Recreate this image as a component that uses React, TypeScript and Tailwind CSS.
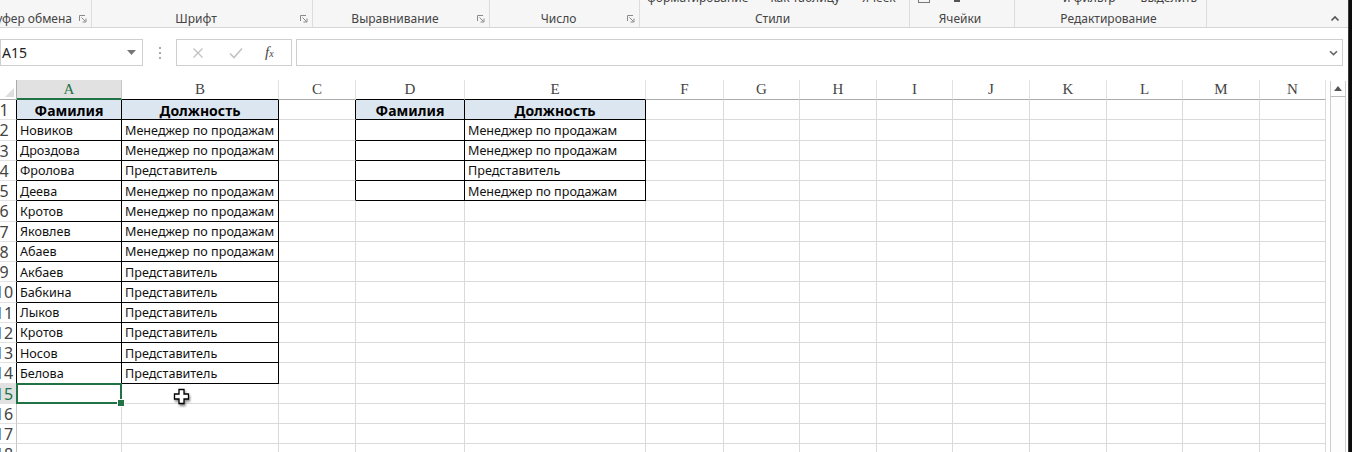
import React from 'react';

const colLetters = ['A', 'B', 'C', 'D', 'E', 'F', 'G', 'H', 'I', 'J', 'K', 'L', 'M', 'N'];

const colA = ['Фамилия', 'Новиков', 'Дроздова', 'Фролова', 'Деева', 'Кротов', 'Яковлев', 'Абаев', 'Акбаев', 'Бабкина', 'Лыков', 'Кротов', 'Носов', 'Белова'];
const mgr = 'Менеджер по продажам';
const rep = 'Представитель';
const colB = ['Должность', mgr, mgr, rep, mgr, mgr, mgr, mgr, rep, rep, rep, rep, rep, rep];
const colE = ['Должность', mgr, mgr, rep, mgr];

const gridCols = 'grid grid-cols-[17px_105px_157px_77px_109px_181px_78px_76px_77px_76px_77px_77px_76px_77px_66px]';

function Launcher() {
  return (
    <svg width="8" height="8" viewBox="0 0 8 8" className="shrink-0">
      <path d="M0.5 6V0.5H6" stroke="#8a8a8a" fill="none" />
      <path d="M2.5 2.5L6.5 6.5M7 3.5V7H3.5" stroke="#8a8a8a" fill="none" />
    </svg>
  );
}

function RibbonGroup({ width, label, launcher, top }: { width: string; label: string; launcher?: boolean; top?: React.ReactNode }) {
  return (
    <div className={`${width} h-full flex flex-col border-r border-[#dcdcdc] shrink-0`}>
      <div className="h-[11px] overflow-hidden relative">{top}</div>
      <div className="flex-1 flex items-center pr-[4px]">
        <div className="flex-1 whitespace-nowrap text-[12px] text-[#444] text-center leading-[16px]">{label}</div>
        {launcher && <Launcher />}
      </div>
    </div>
  );
}

function TopText({ items }: { items: { text: string; pl: string }[] }) {
  return (
    <div className="flex -mt-[9px] text-[12px] text-[#444] whitespace-nowrap leading-[14px]">
      {items.map((it, i) => (
        <span key={i} className={it.pl}>{it.text}</span>
      ))}
    </div>
  );
}

function Ribbon() {
  return (
    <div className="h-[28px] shrink-0 flex bg-[#f6f6f6] border-b border-[#d6d6d6] font-['Noto_Sans',sans-serif]">
      <div className="w-[92px] h-full flex flex-col border-r border-[#dcdcdc] shrink-0">
        <div className="h-[11px]" />
        <div className="flex-1 flex items-center pr-[4px]">
          <div className="flex-1 min-w-0 overflow-hidden whitespace-nowrap text-[12px] text-[#444] flex justify-end pr-[7px] leading-[16px]">
            <span className="shrink-0">Буфер обмена</span>
          </div>
          <Launcher />
        </div>
      </div>
      <RibbonGroup width="w-[221px]" label="Шрифт" launcher />
      <RibbonGroup width="w-[177px]" label="Выравнивание" launcher />
      <RibbonGroup width="w-[150px]" label="Число" launcher />
      <RibbonGroup
        width="w-[270px]"
        label="Стили"
        top={<TopText items={[{ text: 'форматирование', pl: 'pl-[7px]' }, { text: 'как таблицу', pl: 'pl-[22px]' }, { text: 'ячеек', pl: 'pl-[22px]' }]} />}
      />
      <RibbonGroup
        width="w-[105px]"
        label="Ячейки"
        top={
          <div className="flex gap-[24px] pl-[8px]">
            <div className="w-[12px] h-[3px] border-b border-x border-[#777]" />
            <div className="w-[6px] h-[2px] bg-[#555]" />
          </div>
        }
      />
      <RibbonGroup
        width="w-[192px]"
        label="Редактирование"
        top={<TopText items={[{ text: 'и фильтр', pl: 'pl-[48px]' }, { text: 'выделить', pl: 'pl-[25px]' }]} />}
      />
      <div className="flex-1 flex items-center justify-end pr-[8px] pt-[10px]">
        <svg width="10" height="7" viewBox="0 0 10 7">
          <path d="M1.5 5.5L5 2L8.5 5.5" stroke="#555" strokeWidth="1.6" fill="none" />
        </svg>
      </div>
    </div>
  );
}

function FormulaBar() {
  return (
    <div className="h-[52px] shrink-0 flex items-start pt-[11px] bg-white font-['Noto_Sans',sans-serif]">
      <div className="w-[143px] h-[27px] border border-[#cfcfcf] flex items-center pl-[1px] pr-[6px] shrink-0">
        <span className="flex-1 text-[14px] text-[#222]">A15</span>
        <svg width="9" height="5" viewBox="0 0 9 5">
          <path d="M0 0H9L4.5 5Z" fill="#777" />
        </svg>
      </div>
      <div className="w-[33px] h-[27px] flex flex-col items-center justify-center gap-[3px] shrink-0">
        <div className="w-[2px] h-[2px] bg-[#aaa]" />
        <div className="w-[2px] h-[2px] bg-[#aaa]" />
        <div className="w-[2px] h-[2px] bg-[#aaa]" />
      </div>
      <div className="w-[116px] h-[27px] border border-[#cfcfcf] flex items-center pl-[15px] shrink-0">
        <svg width="12" height="12" viewBox="0 0 12 12">
          <path d="M1.5 1.5L10.5 10.5M10.5 1.5L1.5 10.5" stroke="#c2c2c2" strokeWidth="1.3" />
        </svg>
        <svg width="14" height="12" viewBox="0 0 14 12" className="ml-[25px]">
          <path d="M1 6.5L5 10.5L13 1.5" stroke="#c2c2c2" strokeWidth="1.6" fill="none" />
        </svg>
        <span className="ml-[22px] font-['Liberation_Serif',serif] italic text-[15px] text-[#444] leading-[18px]">
          f<span className="text-[10px]">x</span>
        </span>
      </div>
      <div className="ml-[4px] w-[1047px] h-[27px] border border-[#cfcfcf] flex items-center justify-end pr-[4px]">
        <svg width="9" height="6" viewBox="0 0 9 6">
          <path d="M1 1.2L4.5 4.6L8 1.2" stroke="#666" strokeWidth="1.6" fill="none" />
        </svg>
      </div>
    </div>
  );
}

function HeaderRow() {
  return (
    <div className={`${gridCols} h-[20px] shrink-0 font-['Liberation_Serif',serif] text-[15px]`}>
      <div className="border-r border-b border-[#ababab] bg-white flex items-end justify-end p-[2px]">
        <svg width="9" height="9" viewBox="0 0 9 9">
          <path d="M9 0V9H0Z" fill="#dedede" />
        </svg>
      </div>
      {colLetters.map((l, i) => {
        if (i === 0) {
          return (
            <div key={l} className="bg-[#e1e1e1] border-r border-[#c6c6c6] border-b-2 border-b-[#217346] flex items-center justify-center text-[#217346] leading-[17px]">
              {l}
            </div>
          );
        }
        const dark = i === 1 || i === 3 || i === 4;
        return (
          <div key={l} className={`bg-white border-r border-[#e2e2e2] border-b ${dark ? 'border-b-black' : 'border-b-[#ababab]'} flex items-center justify-center text-[#444] leading-[17px]`}>
            {l}
          </div>
        );
      })}
    </div>
  );
}

function cellText(r: number, c: number) {
  if (c === 0 && r <= 14) return colA[r - 1];
  if (c === 1 && r <= 14) return colB[r - 1];
  if (c === 3 && r === 1) return 'Фамилия';
  if (c === 4 && r <= 5) return colE[r - 1];
  return '';
}

function inTable(r: number, c: number) {
  return (r <= 14 && (c === 0 || c === 1)) || (r <= 5 && (c === 3 || c === 4));
}

function Body() {
  const rows = Array.from({ length: 18 }, (_, i) => i + 1);
  return (
    <div className={`${gridCols} auto-rows-[20.25px] shrink-0 font-['Noto_Sans',sans-serif]`}>
      {rows.map((r) => (
        <React.Fragment key={r}>
          <div
            className={`flex items-center overflow-hidden whitespace-nowrap text-[16px] leading-[18px] pt-[1px] border-b border-b-[#e2e2e2] border-r ${
              r <= 14 ? 'border-r-black' : r === 15 ? 'border-r-[#217346]' : 'border-r-[#c6c6c6]'
            } ${r === 15 ? 'bg-[#e1e1e1] text-[#217346]' : 'bg-white text-[#444]'}`}
          >
            <span className="-ml-[8px] w-[24px] shrink-0 text-center">{r}</span>
          </div>
          {colLetters.map((_, c) => {
            const t = inTable(r, c);
            const leftOfTable = r <= 5 && c === 2;
            const head = r === 1 && t;
            const text = cellText(r, c);
            const border = t
              ? 'border-r border-b border-black'
              : leftOfTable
              ? 'border-r border-b border-r-black border-b-[#dadada]'
              : 'border-r border-b border-[#dadada]';
            return (
              <div
                key={c}
                className={`relative flex items-center whitespace-nowrap overflow-visible ${border} ${
                  head ? 'bg-[#dce6f1] justify-center font-bold text-[14px] text-black pt-[2px]' : 'px-[3px] pt-[3px] text-[12.6px] text-[#111]'
                } ${r === 15 && c === 0 ? 'z-10' : ''}`}
              >
                {text}
                {r === 15 && c === 0 && (
                  <div className="absolute -left-[1px] -top-[1px] -right-[1px] -bottom-[1px] border-2 border-[#217346]">
                    <div className="absolute -right-[5px] -bottom-[5px] w-[8px] h-[8px] bg-[#217346] border border-white" />
                  </div>
                )}
                {r === 15 && c === 1 && (
                  <svg width="18" height="18" viewBox="0 0 18 18" className="absolute left-[51px] top-[4px] drop-shadow-[1px_2px_1px_rgba(0,0,0,0.45)]">
                    <path d="M6 1.5H11V6H15.5V11H11V15.5H6V11H1.5V6H6Z" fill="#fff" stroke="#000" strokeWidth="1.3" />
                  </svg>
                )}
              </div>
            );
          })}
        </React.Fragment>
      ))}
    </div>
  );
}

function Scrollbar() {
  return (
    <div className="w-[22px] pl-[4px] pr-[2px] pt-[1px] bg-white">
      <div className="h-full border-x border-[#cdcdcd] flex flex-col">
        <div className="h-[16px] border-b border-[#bdbdbd] flex items-center justify-center bg-white">
          <svg width="8" height="5" viewBox="0 0 8 5">
            <path d="M0 5L4 0L8 5Z" fill="#555" />
          </svg>
        </div>
        <div className="flex-1 bg-[#fdfdfd]" />
      </div>
    </div>
  );
}

export default function App() {
  return (
    <div className="w-[1352px] h-[452px] overflow-hidden flex bg-white">
      <div className="w-[1348px] h-full flex flex-col shrink-0 overflow-hidden">
        <Ribbon />
        <FormulaBar />
        <div className="flex flex-1 min-h-0 overflow-hidden">
          <div className="w-[1326px] shrink-0 flex flex-col">
            <HeaderRow />
            <Body />
          </div>
          <Scrollbar />
        </div>
      </div>
      <div className="flex-1 bg-[#0c0c0c] border-l border-[#3a3a3a]" />
    </div>
  );
}
